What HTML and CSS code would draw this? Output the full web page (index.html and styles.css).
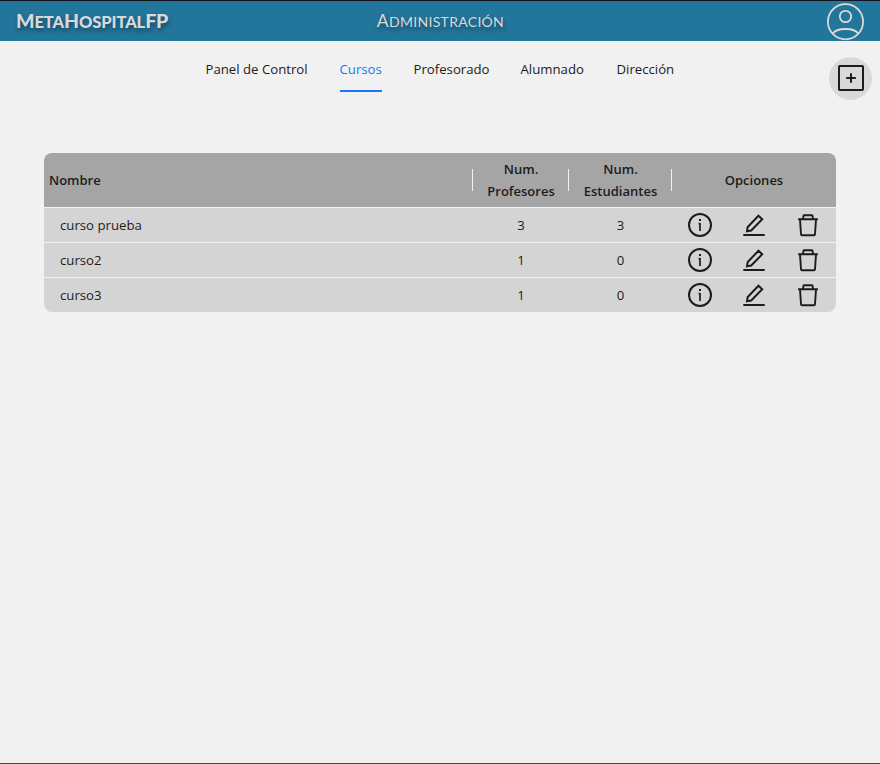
FILE: index.html
```html
<!DOCTYPE html>
<html lang="es">
<head>
<meta charset="utf-8">
<title>MetaHospitalFP</title>
<link rel="stylesheet" href="styles.css">
</head>
<body>
<svg class="sprite" aria-hidden="true">
  <symbol id="info" viewBox="0 0 24 24"><circle cx="12" cy="12" r="11"/><path d="M12 10V18M10.6 10.6h1.4" stroke-width="1.7"/><path d="M12 6v2" stroke-width="2"/></symbol>
  <symbol id="edit" viewBox="0 0 24 24"><path d="M16.5 2.7l3.7 3.6-11 11.2-4.2.7.7-4.2z" stroke-width="2"/><path d="M1.3 22h21.4"/></symbol>
  <symbol id="trash" viewBox="0 0 24 24"><path d="M2.1 6.2h19.8M7 5.9l.5-3.2q.1-.5.7-.5h7.6q.6 0 .7.5l.5 3.2M4 6.4l1 14.8q.1 1.1 1 1.1h12q.9 0 1-1.1L20 6.4" stroke-width="1.9"/></symbol>
</svg>
<header class="topbar">
  <div class="brand"><span>M</span>eta<span>H</span>ospital<span>FP</span></div>
  <h1 class="title"><span>A</span>dministración</h1>
  <svg class="avatar" viewBox="0 0 38 38"><circle cx="18.5" cy="18.7" r="17.6"/><circle cx="18.5" cy="13.5" r="5.7"/><path d="M5.5 31Q8.5 26 18.5 26T31.5 31"/></svg>
</header>
<div class="toolbar">
  <nav class="tabs">
    <a class="tab tab-panel">Panel de Control</a>
    <a class="tab tab-courses active">Cursos</a>
    <a class="tab tab-teachers">Profesorado</a>
    <a class="tab tab-students">Alumnado</a>
    <a class="tab tab-management">Dirección</a>
  </nav>
  <button class="add" aria-label="+"><svg viewBox="0 0 28 28"><rect x="2" y="2" width="24" height="24" rx=".8"/><path d="M14 9.2v9.6M9.2 14h9.6"/></svg></button>
</div>
<main class="table">
  <div class="row head">
    <div class="name">Nombre</div><div class="cell">Num.<br>Profesores</div><div class="cell">Num.<br>Estudiantes</div><div class="cell">Opciones</div>
  </div>
  <div class="row">
    <div class="name">curso prueba</div><div class="cell">3</div><div class="cell">3</div>
    <div class="options"><svg><use href="#info"/></svg><svg><use href="#edit"/></svg><svg><use href="#trash"/></svg></div>
  </div>
  <div class="row">
    <div class="name">curso2</div><div class="cell">1</div><div class="cell">0</div>
    <div class="options"><svg><use href="#info"/></svg><svg><use href="#edit"/></svg><svg><use href="#trash"/></svg></div>
  </div>
  <div class="row">
    <div class="name">curso3</div><div class="cell">1</div><div class="cell">0</div>
    <div class="options"><svg><use href="#info"/></svg><svg><use href="#edit"/></svg><svg><use href="#trash"/></svg></div>
  </div>
</main>
</body>
</html>
```
FILE: styles.css
```css
* { box-sizing: border-box; }
body {
  margin: 0;
  height: 764px;
  overflow: hidden;
  background: #f1f1f1;
  border-top: 1px solid #14141f;
  border-bottom: 1px solid #484848;
  color: #1c1c1c;
  font: 13.2px/22px "Open Sans", "Noto Sans", sans-serif;
}
svg { fill: none; stroke: #1c1c1c; stroke-width: 2; }
.sprite { display: none; }
.topbar {
  display: grid;
  grid-template-columns: 1fr auto 1fr;
  align-items: center;
  height: 40px;
  padding: 0 15px 0 16px;
  background: #22759b;
  color: #d9d9d9;
  font-family: Lato, sans-serif;
  text-transform: uppercase;
  text-shadow: 1px 3px 4px rgba(0, 0, 0, .4);
}
.brand { font-size: 16.5px; font-weight: 900; letter-spacing: -.1px; }
.brand span { font-size: 19.5px; }
.title { margin: 0; font-size: 14px; font-weight: 400; letter-spacing: .3px; }
.title span { font-size: 17.5px; }
.avatar { width: 38px; height: 38px; margin-top: 1px; justify-self: end; stroke: #d9d9d9; stroke-width: 1.8; }
.toolbar {
  display: grid;
  grid-template-columns: 1fr auto 1fr;
  height: 112px;
  padding: 0 8px;
}
.tabs { grid-column: 2; display: flex; gap: 32px; height: 51px; }
.tab { padding-top: 17px; white-space: nowrap; }
.tab-panel { width: 102px; }
.tab-courses { width: 42px; }
.tab-teachers { width: 75px; }
.tab-students { width: 64px; }
.tab-management { width: 58px; }
.active { color: #1677ff; border-bottom: 2px solid #1677ff; }
.add {
  display: grid;
  place-items: center;
  justify-self: end;
  width: 43px;
  height: 43px;
  margin-top: 16px;
  padding: 0 0 1px;
  border: 0;
  border-radius: 50%;
  background: #d9d9d9;
}
.add svg { width: 28px; height: 28px; }
.table { margin: 0 44px; overflow: hidden; border-radius: 8px; }
.row {
  display: grid;
  grid-template-columns: 429px 96px 103px 164px;
  align-items: center;
  height: 35px;
  border-bottom: 1px solid #f1f1f1;
  background: #d4d4d4;
}
.row:last-child { height: 34px; border-bottom: 0; }
.name { padding-left: 16px; }
.cell { text-align: center; }
.head { height: 55px; background: #a5a5a5; font-weight: 600; font-size: 13px; }
.head .name { padding-left: 5px; }
.head > :not(:last-child) {
  background: linear-gradient(#f1f1f1, #f1f1f1) right center / 1px 22px no-repeat;
}
.options { display: flex; gap: 30px; padding-left: 16px; }
.options svg { width: 24px; height: 24px; }
```
